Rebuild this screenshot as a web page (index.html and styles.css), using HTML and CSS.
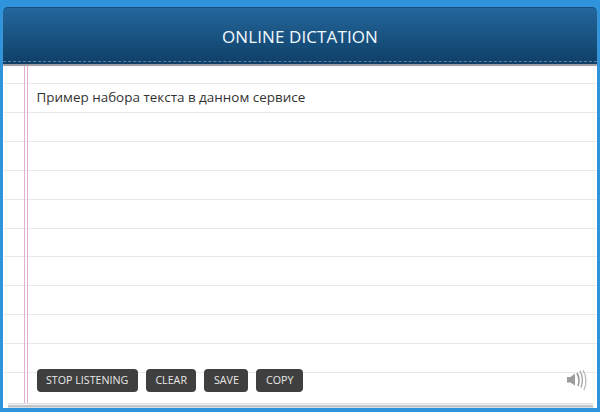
FILE: index.html
```html
<!DOCTYPE html>
<html lang="ru">
<head>
<meta charset="utf-8">
<title>Online Dictation</title>
<link rel="stylesheet" href="styles.css">
</head>
<body>
<main class="notebook">
  <header class="header"><h1 class="title">ONLINE DICTATION</h1></header>
  <section class="paper">
    <div class="rules">
      <div class="rule"></div><div class="rule"></div><div class="rule"></div><div class="rule"></div><div class="rule"></div>
      <div class="rule"></div><div class="rule"></div><div class="rule"></div><div class="rule"></div><div class="rule"></div>
    </div>
    <div class="margin-lines"></div>
    <p class="text">Пример набора текста в данном сервисе</p>
    <div class="toolbar">
      <button class="btn">STOP LISTENING</button>
      <button class="btn">CLEAR</button>
      <button class="btn">SAVE</button>
      <button class="btn">COPY</button>
      <svg class="speaker" width="22" height="24" viewBox="0 0 22 24" fill="none" aria-hidden="true">
        <path d="M1 9h3.500L9 5.500v12L4.500 14.500H1z" fill="#9c9c9c"/>
        <path d="M11 5c2.200 4 2.400 9 1 13" stroke="#989898" stroke-width="1.600"/>
        <path d="M14 3c2.800 5 3 11 1 16.500" stroke="#a6a6a6" stroke-width="1.400"/>
        <path d="M17 2c3.500 6 3.800 14 1 20" stroke="#bcbcbc" stroke-width="1.300"/>
      </svg>
    </div>
  </section>
</main>
</body>
</html>
```
FILE: styles.css
```css
html, body {
  margin: 0;
  height: 100%;
}
body {
  background: #3094dc;
  padding: 7px 3px 4px;
  box-sizing: border-box;
  height: 412px;
  overflow: hidden;
  font-family: "Open Sans", "Noto Sans", sans-serif;
}
.notebook {
  height: 401px;
  display: flex;
  flex-direction: column;
  position: relative;
}
.notebook::after {
  content: "";
  position: absolute;
  left: 5px;
  right: 4px;
  bottom: 0;
  height: 5px;
  background: linear-gradient(#d8d8d8, #f6f6f6 35%, #a9b0b6 60%, #e8edf0);
  z-index: 2;
}
.header {
  height: 57px;
  flex: none;
  box-sizing: border-box;
  background: linear-gradient(#23679c, #0f3f67);
  border-radius: 5px 5px 0 0;
  border-top: 1px solid #14507f;
  box-shadow: 0 2px 1px #9a9aa2;
  display: flex;
  align-items: center;
  justify-content: center;
  position: relative;
  z-index: 1;
}
.header::after {
  content: "";
  position: absolute;
  left: 0;
  right: 0;
  bottom: 2px;
  border-bottom: 1px dashed #5a83a2;
}
.title {
  margin: 0;
  font-size: 17px;
  font-weight: 400;
  color: #f2f9fc;
  letter-spacing: 0.1px;
}
.paper {
  flex: 1;
  min-height: 0;
  position: relative;
  padding: 0 0 0 33.500px;
  background-color: #fff;
  display: flex;
  flex-direction: column;
  justify-content: space-between;
}
.rules {
  position: absolute;
  top: 19px;
  left: 1px;
  right: 0;
  height: 289px;
  display: flex;
  flex-direction: column;
  border-top: 1px solid #e8e9e9;
}
.rule {
  flex: 1;
  border-bottom: 1px solid #e8e9e9;
}
.margin-lines {
  position: absolute;
  top: 0;
  bottom: 0;
  left: 21px;
  width: 2px;
  border-left: 1px solid #e3aed4;
  border-right: 1px solid #e3aed4;
}
.text {
  position: relative;
  margin: 24px 0 0;
  font-size: 13.450px;
  line-height: 18px;
  color: #333;
}
.toolbar {
  position: relative;
  display: flex;
  align-items: center;
  gap: 8px;
  padding-right: 9px;
  margin-bottom: 16px;
}
.btn {
  height: 23px;
  padding: 0 9.500px;
  border: 0;
  border-radius: 4px;
  background: #3f3f3f;
  color: #e8e8e8;
  font: 400 10.700px "Open Sans", "Noto Sans", sans-serif;
}
.speaker {
  margin-left: auto;
}
```
